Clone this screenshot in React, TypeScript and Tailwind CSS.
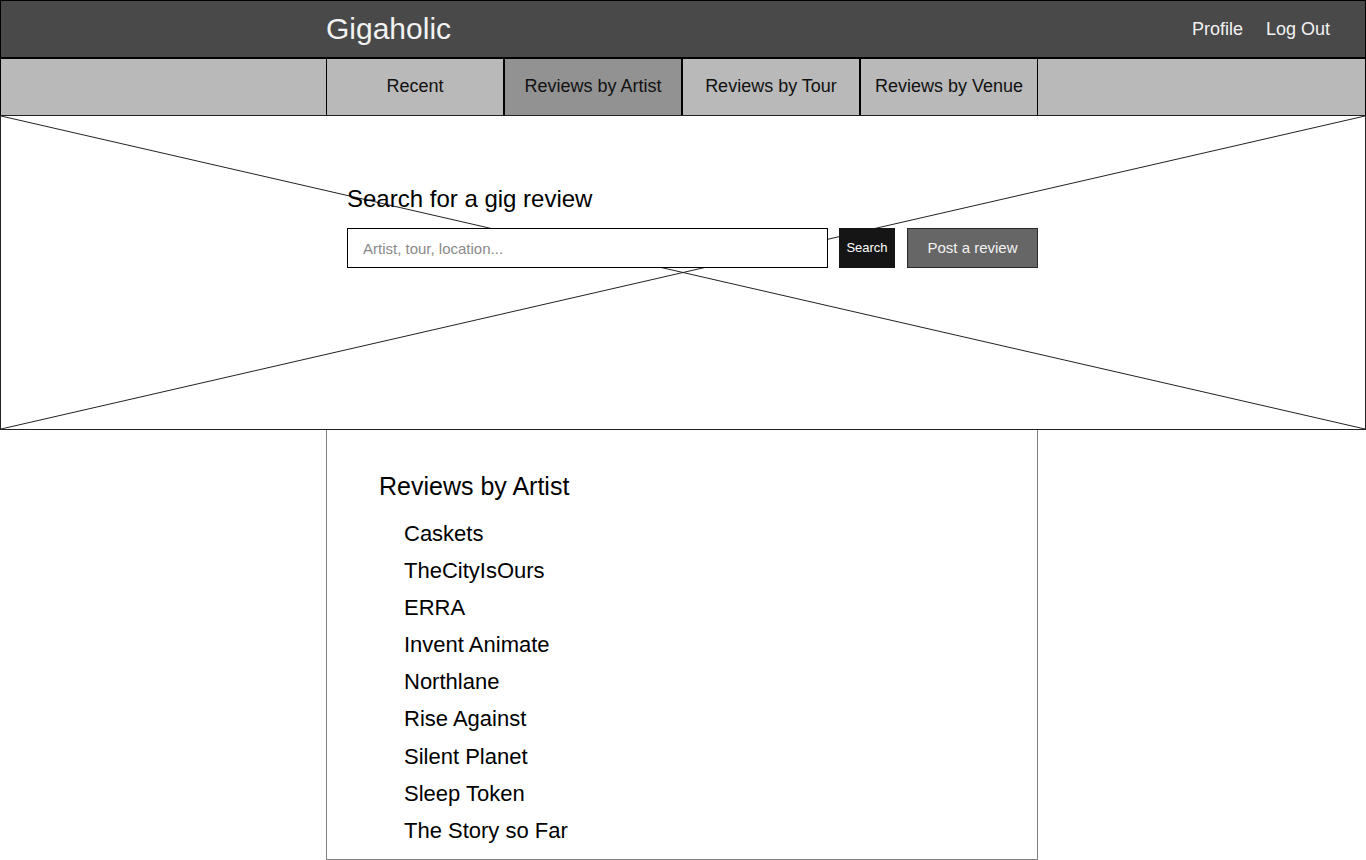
import * as React from "react";

const tabs = ["Recent", "Reviews by Artist", "Reviews by Tour", "Reviews by Venue"];

const artists = [
  "Caskets",
  "TheCityIsOurs",
  "ERRA",
  "Invent Animate",
  "Northlane",
  "Rise Against",
  "Silent Planet",
  "Sleep Token",
  "The Story so Far",
];

export default function App() {
  return (
    <div className="w-[1366px] h-[860px] overflow-hidden bg-white font-['Liberation_Sans',Arial,sans-serif]">
      {/* Top bar */}
      <header className="h-[58px] bg-[#494949] border border-black flex items-center pl-[325px] pr-[35px]">
        <span className="text-[30px] text-[#f2f2f2] leading-none">Gigaholic</span>
        <nav className="ml-auto flex gap-[23px] text-[18px] text-[#f2f2f2]">
          <a>Profile</a>
          <a>Log Out</a>
        </nav>
      </header>

      {/* Tabs */}
      <div className="h-[58px] bg-[#b9b9b9] border border-black flex pl-[325px]">
        {tabs.map((t) => (
          <div
            key={t}
            className={
              "w-[178px] border-x border-black flex items-center justify-center pb-[2px] text-[18px] text-[#111] " +
              (t === "Reviews by Artist" ? "bg-[#929292]" : "")
            }
          >
            {t}
          </div>
        ))}
      </div>

      {/* Hero placeholder */}
      <section className="relative h-[315px] border border-[#222] -mt-px">
        <svg className="absolute inset-0 w-full h-full" preserveAspectRatio="none" viewBox="0 0 100 100">
          <line x1="0" y1="0" x2="100" y2="100" stroke="#222" strokeWidth="1" vectorEffect="non-scaling-stroke" />
          <line x1="100" y1="0" x2="0" y2="100" stroke="#222" strokeWidth="1" vectorEffect="non-scaling-stroke" />
        </svg>
        <div className="relative ml-[346px] w-[691px] pt-[69px]">
          <h1 className="text-[24px] leading-[28px] text-black">Search for a gig review</h1>
          <div className="mt-[15px] flex items-center h-[40px]">
            <input
              className="w-[481px] h-[40px] border border-black bg-white px-[15px] text-[15px] placeholder:text-[#8a8a8a] outline-none"
              placeholder="Artist, tour, location..."
            />
            <button className="ml-[11px] w-[56px] h-[40px] bg-[#151515] text-white text-[13px]">Search</button>
            <button className="ml-[12px] w-[131px] h-[40px] bg-[#666666] border border-[#2a2a2a] text-[#f2f2f2] text-[15px]">
              Post a review
            </button>
          </div>
        </div>
      </section>

      {/* Artist list card */}
      <main className="ml-[326px] w-[712px] h-[431px] border border-[#808080] -mt-px pt-[42px] pl-[52px]">
        <h2 className="text-[25px] leading-[28px] text-black">Reviews by Artist</h2>
        <ul className="mt-[15px] ml-[25px]">
          {artists.map((a) => (
            <li key={a} className="text-[22px] leading-[37.1px] text-black">
              {a}
            </li>
          ))}
        </ul>
      </main>
    </div>
  );
}
